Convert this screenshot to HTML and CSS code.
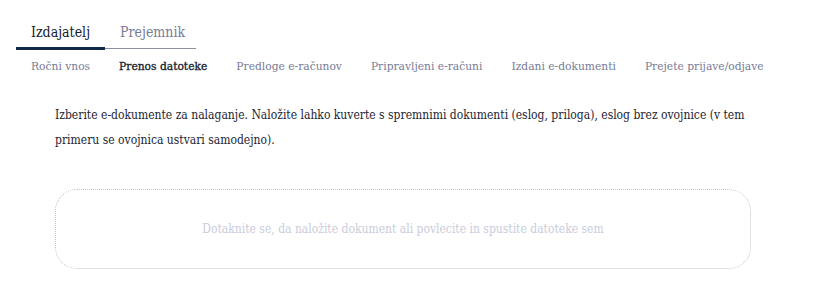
FILE: index.html
```html
<!DOCTYPE html>
<html lang="sl">
<head>
    <meta charset="UTF-8">
    <meta name="viewport" content="width=device-width, initial-scale=1.0">
    <title>Prenos datoteke</title>
    <link rel="stylesheet" href="styles.css">
</head>
<body>
    <div class="zavihki">
        <a class="zavihek aktiven">Izdajatelj</a>
        <a class="zavihek">Prejemnik</a>
    </div>

    <nav class="podmeni">
        <a class="podmeni-povezava">Ročni vnos</a>
        <a class="podmeni-povezava aktiven">Prenos datoteke</a>
        <a class="podmeni-povezava">Predloge e-računov</a>
        <a class="podmeni-povezava">Pripravljeni e-računi</a>
        <a class="podmeni-povezava">Izdani e-dokumenti</a>
        <a class="podmeni-povezava">Prejete prijave/odjave</a>
    </nav>

    <div class="vsebina">
        <p class="navodilo">
            Izberite e-dokumente za nalaganje. Naložite lahko kuverte s spremnimi dokumenti (eslog, priloga), eslog brez ovojnice (v tem primeru se ovojnica ustvari samodejno).
        </p>

        <div class="obmocje-nalaganja">
            Dotaknite se, da naložite dokument ali povlecite in spustite datoteke sem
        </div>
    </div>
</body>
</html>
```

FILE: styles.css
```css
:root {
    --temna: #0d2b45;
    --siva: #767b96;
    --svetla: #c9ccdc;
}

body {
    font-family: "DejaVu Serif Condensed", "DejaVu Serif", serif;
    color: #1c2433;
    margin: 0;
    padding: 24px 0 0 16px;
    background: #fff;
}

.zavihki {
    display: flex;
    width: 180px;
    border-bottom: 1px solid #8a8fa3;
}

.zavihek {
    font-size: 14px;
    padding: 0 15px 7px 15px;
    color: var(--siva);
    white-space: nowrap;
}

.zavihek.aktiven {
    color: #14202e;
    border-bottom: 3px solid var(--temna);
    margin-bottom: -2px;
}

.podmeni {
    display: flex;
    gap: 29px;
    padding: 10px 0 0 15px;
}

.podmeni-povezava {
    font-size: 11.9px;
    color: var(--siva);
    white-space: nowrap;
}

.podmeni-povezava.aktiven {
    color: #14202e;
    -webkit-text-stroke: 0.3px #14202e;
}

.vsebina {
    padding: 0 65px 0 39px;
}

.navodilo {
    font-size: 12px;
    line-height: 25px;
    margin: 30px 0 0 0;
}

.obmocje-nalaganja {
    margin-top: 36px;
    height: 78px;
    border: 1px dotted #c4c4c4;
    border-radius: 22px;
    display: flex;
    align-items: center;
    justify-content: center;
    font-size: 12px;
    color: var(--svetla);
}
```
